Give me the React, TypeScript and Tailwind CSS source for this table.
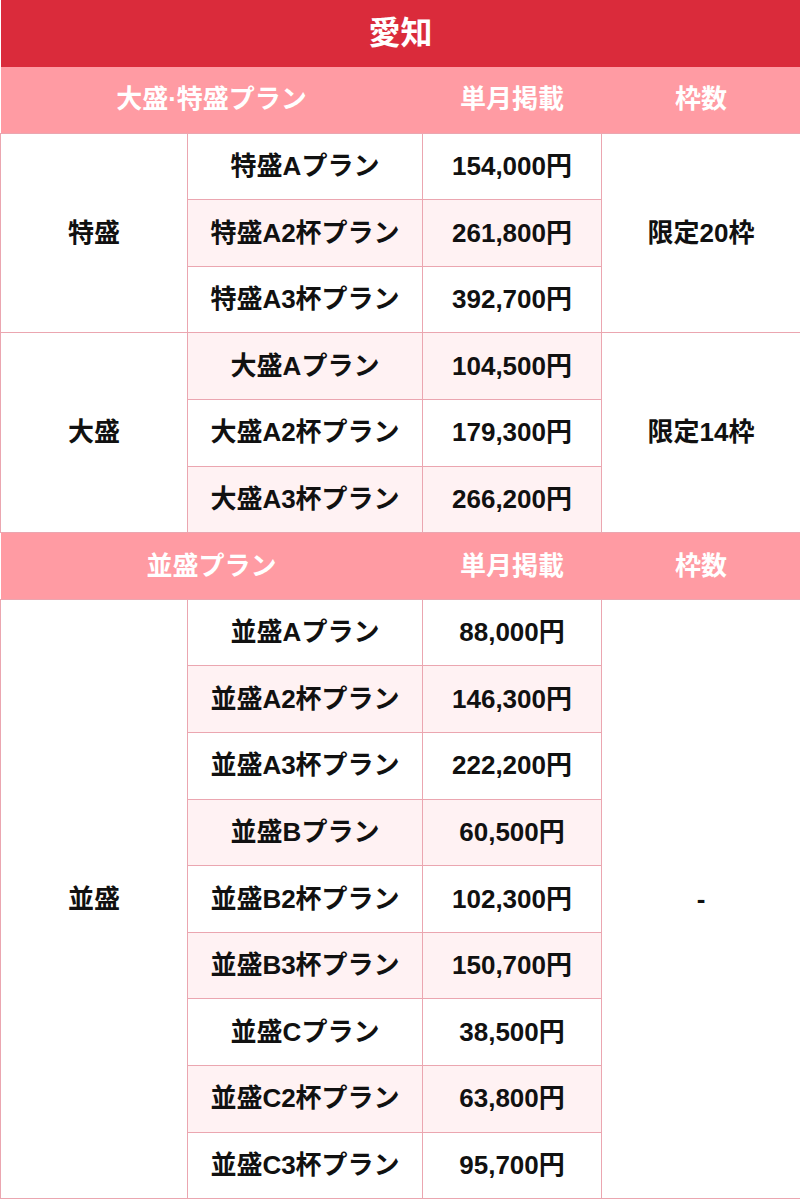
import React from 'react';

interface PlanRow {
  name: string;
  price: string;
}

interface PlanGroup {
  label: string;
  limit: string;
  rows: PlanRow[];
}

interface Section {
  title: string;
  groups: PlanGroup[];
}

const sections: Section[] = [
  {
    title: '大盛·特盛プラン',
    groups: [
      {
        label: '特盛',
        limit: '限定20枠',
        rows: [
          { name: '特盛Aプラン', price: '154,000円' },
          { name: '特盛A2杯プラン', price: '261,800円' },
          { name: '特盛A3杯プラン', price: '392,700円' },
        ],
      },
      {
        label: '大盛',
        limit: '限定14枠',
        rows: [
          { name: '大盛Aプラン', price: '104,500円' },
          { name: '大盛A2杯プラン', price: '179,300円' },
          { name: '大盛A3杯プラン', price: '266,200円' },
        ],
      },
    ],
  },
  {
    title: '並盛プラン',
    groups: [
      {
        label: '並盛',
        limit: '-',
        rows: [
          { name: '並盛Aプラン', price: '88,000円' },
          { name: '並盛A2杯プラン', price: '146,300円' },
          { name: '並盛A3杯プラン', price: '222,200円' },
          { name: '並盛Bプラン', price: '60,500円' },
          { name: '並盛B2杯プラン', price: '102,300円' },
          { name: '並盛B3杯プラン', price: '150,700円' },
          { name: '並盛Cプラン', price: '38,500円' },
          { name: '並盛C2杯プラン', price: '63,800円' },
          { name: '並盛C3杯プラン', price: '95,700円' },
        ],
      },
    ],
  },
];

const cell = 'border border-[#eba6b0] text-center align-middle';

export default function App() {
  return (
    <div
      className="w-[800px] bg-white text-[26px] font-bold text-[#111]"
      style={{ fontFamily: '"Liberation Sans", "Noto Sans CJK JP", sans-serif' }}
    >
      <table className="w-[800px] table-fixed border-collapse">
        <colgroup>
          <col className="w-[187px]" />
          <col className="w-[235px]" />
          <col className="w-[179px]" />
          <col className="w-[199px]" />
        </colgroup>
        <tbody>
          <tr className="h-[66.6px] bg-[#da2b3b]">
            <td colSpan={4} className="text-center text-[32px] text-white">
              愛知
            </td>
          </tr>
          {sections.map((section) => {
            let idx = 0;
            return (
              <React.Fragment key={section.title}>
                <tr className="h-[66.6px] bg-[#ff9ba3] text-white">
                  <td colSpan={2} className="text-center">
                    {section.title}
                  </td>
                  <td className="text-center">単月掲載</td>
                  <td className="text-center">枠数</td>
                </tr>
                {section.groups.map((group) =>
                  group.rows.map((row, i) => {
                    const alt = idx++ % 2 === 1;
                    const bg = alt ? 'bg-[#fff2f3]' : 'bg-white';
                    return (
                      <tr key={row.name} className="h-[66.6px]">
                        {i === 0 && (
                          <td rowSpan={group.rows.length} className={`${cell} bg-white`}>
                            {group.label}
                          </td>
                        )}
                        <td className={`${cell} ${bg}`}>{row.name}</td>
                        <td className={`${cell} ${bg}`}>{row.price}</td>
                        {i === 0 && (
                          <td rowSpan={group.rows.length} className={`${cell} bg-white`}>
                            {group.limit}
                          </td>
                        )}
                      </tr>
                    );
                  })
                )}
              </React.Fragment>
            );
          })}
        </tbody>
      </table>
    </div>
  );
}
